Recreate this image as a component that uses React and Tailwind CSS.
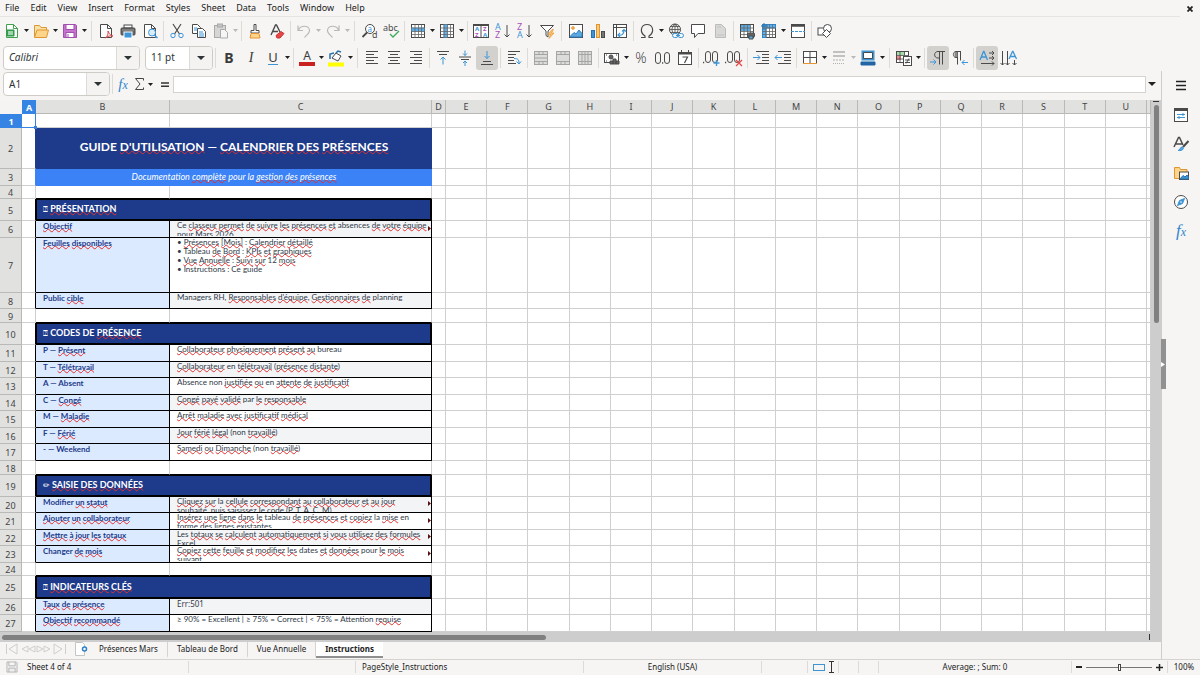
import { Fragment, useState } from "react";
import clsx from "clsx";

const BLUE = "#3d95d6";
const INK = "#4a4a4a";

function Svg({ size = 18, children, className }) {
  return (
    <svg
      width={size}
      height={size}
      viewBox="0 0 18 18"
      fill="none"
      stroke={INK}
      strokeWidth="1"
      className={clsx("shrink-0 overflow-visible", className)}
      aria-hidden="true"
    >
      {children}
    </svg>
  );
}

function Grid({ tint }) {
  return (
    <>
      <rect x="2.500" y="2.500" width="13" height="13" fill="#fff" />
      {tint}
      <path d="M2.500 6h13M2.500 9.500h13M2.500 12.500h13M6 2.500v13M9.500 2.500v13M12.500 2.500v13" stroke="#666" strokeWidth=".8" />
    </>
  );
}

const icons = {
  newDoc: (
    <>
      <path d="M3.500 2.500h7l4 4v9h-11z" fill="#fff" stroke="#3fa04d" />
      <path d="M10.500 2.500v4h4" stroke="#3fa04d" />
      <path d="M4 8h7v6H4z" fill="#3fa95a" stroke="#2e9145" />
      <path d="M5 10h5M5 12h5" stroke="#fff" />
    </>
  ),
  open: (
    <>
      <path d="M2.500 15V3.500h5l1.500 2h5.500v3" fill="#fbe0a8" stroke="#d99a35" />
      <path d="M2.500 15.500l2.500-7.500h11.500l-2 7.500z" fill="#fcd58a" stroke="#e0962f" />
    </>
  ),
  save: (
    <>
      <path d="M2.500 2.500h12l1 1v12h-13z" fill="#c774cf" stroke="#a14fae" />
      <rect x="5" y="2.500" width="8" height="5" fill="#fff" stroke="#a14fae" />
      <rect x="5" y="10.500" width="8" height="5" fill="#fff" stroke="#a14fae" />
      <path d="M7 12v3" stroke="#a14fae" />
    </>
  ),
  pdf: (
    <>
      <path d="M3.500 2.500h7l4 4v9h-11z" fill="#fff" />
      <path d="M10.500 2.500v4h4" />
      <path d="M8.500 16c2-2 3-4 2.500-7 1 3 3 5 5 5-3-.5-5 0-7.500 2z" stroke="#e04545" />
    </>
  ),
  print: (
    <>
      <rect x="5" y="3" width="8" height="3" fill="#fff" />
      <rect x="2" y="6" width="14" height="7" rx="1" fill="#666" />
      <rect x="5" y="10" width="8" height="6" fill="#3d95d6" stroke="#fff" />
      <path d="M3 8h12" stroke="#999" />
    </>
  ),
  preview: (
    <>
      <path d="M3.500 2.500h7l4 4v9h-11z" fill="#fff" />
      <path d="M10.500 2.500v4h4" />
      <circle cx="11" cy="10.500" r="3.500" fill="#d8ecfa" stroke={BLUE} />
      <path d="M13.500 13l3 3" stroke={BLUE} strokeWidth="1.500" />
    </>
  ),
  cut: (
    <>
      <path d="M5 2l6.500 10M13 2L6.500 12" strokeWidth="1.200" />
      <circle cx="5" cy="13.500" r="2.200" stroke={BLUE} />
      <circle cx="13" cy="13.500" r="2.200" stroke={BLUE} />
    </>
  ),
  copy: (
    <>
      <path d="M2.500 2.500h5l3 3v6h-8z" fill="#fff" />
      <path d="M4 6h3M4 8h3" stroke={BLUE} />
      <path d="M7.500 6.500h5l3 3v6h-8z" fill="#fff" />
      <path d="M9 10h4M9 12h5M9 14h5" stroke={BLUE} />
    </>
  ),
  paste: (
    <>
      <rect x="2.500" y="3.500" width="11" height="12" fill="#d6d6d5" stroke="#aaa" />
      <rect x="5.500" y="2" width="5" height="3" fill="#c4c4c4" stroke="#aaa" />
      <path d="M8.500 7.500h4l3 3v5.500h-7z" fill="#f5f5f5" stroke="#aaa" />
    </>
  ),
  brush: (
    <>
      <path d="M8 2.500h2v6h3v2.500H5V8.500h3z" fill="#fff" />
      <path d="M5 11.500h8l1 4.500H4z" fill="#fcd58a" stroke="#e69532" />
    </>
  ),
  clear: (
    <>
      <path d="M3 13L7.500 3h1L12 10M5 9.500h5" strokeWidth="1.400" />
      <path d="M8 13.500l5-4 3 2-4 4.500H9z" fill="#e84747" stroke="#c93434" />
    </>
  ),
  undo: <path d="M3 3.500v5h5M3.500 8c2-5 10-5 11 0 .5 3-3 5-5 7.500" stroke="#b9b9b9" strokeWidth="1.200" />,
  redo: <path d="M15 3.500v5h-5M14.500 8c-2-5-10-5-11 0-.5 3 3 5 5 7.500" stroke="#b9b9b9" strokeWidth="1.200" />,
  sort: (
    <>
      <rect x="1.500" y="2.500" width="15" height="13" fill="#fff" />
      <path d="M1.500 3h15" strokeWidth="2" />
      <path d="M9 2v14" />
    </>
  ),
  filter: (
    <>
      <path d="M2.500 3.500h13L10 9v6l-2-1.500V9z" fill="#fff" />
      <path d="M14 7.500l-4 5h2.500L11 16.500l5-5.500h-2.500l2-3.500z" fill="#fcc06a" stroke="#e69532" strokeWidth=".7" />
    </>
  ),
  image: (
    <>
      <rect x="2.500" y="2.500" width="13" height="13" fill="#fff" />
      <circle cx="6" cy="6" r="1.300" fill="#fcc06a" stroke="#e69532" />
      <path d="M3 14.500l4-4 2 1.500 3-4 3 3.500v3.500H3z" fill="#5aa9e0" stroke="#2d7fc0" />
    </>
  ),
  chart: (
    <>
      <rect x="2.500" y="8.500" width="3" height="7" fill="#3d95d6" stroke="#2672ae" />
      <rect x="7.500" y="2.500" width="3" height="13" fill="#fcc97a" stroke="#e0962f" />
      <rect x="12.500" y="9.500" width="3" height="6" fill="#777" />
    </>
  ),
  pivot: (
    <>
      <rect x="2.500" y="2.500" width="13" height="13" fill="#fff" />
      <path d="M2.500 5.500h13M5.500 2.500v13" />
      <path d="M7 13c4 1 6-1 6-5M11 9.500l2-2 2 2M9 11l-2 2 2 2" stroke={BLUE} strokeWidth="1.200" />
    </>
  ),
  omega: <path d="M3 15.500h4v-1.500C1 10 3 2.500 9 2.500s8 7.500 2 11.500v1.500h4" strokeWidth="1.200" />,
  link: (
    <>
      <circle cx="8" cy="7.500" r="5.500" />
      <path d="M2.500 7.500h11M8 2v11M4 4.500h8M4 10.500h8M8 2c-4 3-4 8 0 11M8 2c4 3 4 8 0 11" strokeWidth=".8" />
      <rect x="5.500" y="11.500" width="5.500" height="4" rx="2" fill="#f5f5f4" stroke={BLUE} />
      <rect x="11" y="11.500" width="5.500" height="4" rx="2" fill="#f5f5f4" stroke={BLUE} />
      <path d="M9 13.500h4" stroke={BLUE} />
    </>
  ),
  comment: <path d="M2.500 2.500h13v9H9l-3.500 4v-4h-3z" fill="#fff" />,
  header: (
    <>
      <path d="M4.500 2.500h6l4 4v9h-10z" fill="#d8d8d7" stroke="#bbb" />
      <path d="M6 5h4M6 13h7" stroke="#c2c2c2" />
    </>
  ),
  printRange: (
    <>
      <Grid tint={<rect x="3" y="3" width="9" height="6" fill="#5aa9e0" stroke="none" />} />
      <rect x="9.500" y="11" width="7" height="4" rx="1" fill="#666" />
      <path d="M11 14h4v3h-4z" fill="#5aa9e0" />
    </>
  ),
  freeze: (
    <Grid
      tint={
        <>
          <path d="M2.500 2.500h13V6H6v9.500H2.500z" fill="#5fb0ea" stroke="#2f86cc" />
          <path d="M4 1v7M1 4h7" stroke="#2672ae" />
        </>
      }
    />
  ),
  split: (
    <>
      <rect x="2.500" y="2.500" width="13" height="13" fill="#fff" />
      <path d="M2.500 3.500h13" strokeWidth="2.500" />
      <path d="M2 9.500h14" stroke={BLUE} strokeDasharray="3 1" />
    </>
  ),
  shapes: (
    <>
      <rect x="2" y="6" width="8" height="7" fill="#fff" />
      <circle cx="11.500" cy="6.500" r="4" fill="#fff" />
      <path d="M10.500 7.500l4 4-4 4-4-4z" fill="#fff" />
    </>
  ),
  left: <path d="M3 2.500h12M3 5.500h8M3 8.500h12M3 11.500h8M3 14.500h12" />,
  center: <path d="M3 2.500h12M5 5.500h8M3 8.500h12M5 11.500h8M3 14.500h12" />,
  right: <path d="M3 2.500h12M7 5.500h8M3 8.500h12M7 11.500h8M3 14.500h12" />,
  vTop: (
    <>
      <path d="M3 2.500h12M5 5.500h8" />
      <path d="M9 15.500V8M6.500 10.500L9 8l2.500 2.500" stroke={BLUE} />
    </>
  ),
  vMid: (
    <>
      <path d="M3 8h12M5 10.500h8" />
      <path d="M9 1.500v5M7 4.500l2 2 2-2M9 17v-5M7 14l2-2 2 2" stroke={BLUE} />
    </>
  ),
  vBottom: (
    <>
      <path d="M3 15.500h12M5 12.500h8" />
      <path d="M9 2v7.500M6.500 7L9 9.500 11.500 7" stroke={BLUE} />
    </>
  ),
  wrap: (
    <>
      <path d="M3 2.500h12M3 5.500h8M3 8.500h6M3 11.500h6M3 14.500h8" />
      <path d="M9 9.500c4 0 5 1 5 5M11.500 12.500l2.500 2.500 2-2.500" stroke={BLUE} />
    </>
  ),
  merge: (
    <>
      <rect x="2.500" y="2.500" width="13" height="13" fill="#dcdcdb" stroke="#a5a5a5" />
      <path d="M2.500 5.500h13M2.500 12.500h13M2.500 9h13M7 2.500v3M11 2.500v3M7 12.500v3M11 12.500v3" stroke="#a5a5a5" />
    </>
  ),
  mergeCells: (
    <>
      <rect x="2.500" y="2.500" width="13" height="13" fill="#dcdcdb" stroke="#a5a5a5" />
      <path d="M2.500 5.500h13M2.500 12.500h13M7 2.500v3M11 2.500v3M7 12.500v3M11 12.500v3" stroke="#a5a5a5" />
    </>
  ),
  unmerge: (
    <>
      <rect x="2.500" y="2.500" width="13" height="13" fill="#dcdcdb" stroke="#a5a5a5" />
      <path d="M2.500 5.500h13M2.500 12.500h13M6 2.500v13M9 2.500v13M12 2.500v13" stroke="#a5a5a5" />
    </>
  ),
  currency: (
    <>
      <rect x="1.500" y="4.500" width="14" height="9" fill="#fff" />
      <circle cx="8" cy="8" r="2" fill="#666" />
      <path d="M3 6h1M13 6h1M3 12h1" />
      <path d="M7 12h3v3H7zM10 10h3v5h-3zM13 12h3v3h-3z" fill="#666" />
    </>
  ),
  date: (
    <>
      <rect x="2.500" y="3.500" width="13" height="12" fill="#fff" />
      <path d="M2.500 4.500h13" strokeWidth="2" />
      <path d="M5.500 1v3M12.500 1v3" />
      <path d="M6.500 8h5l-3 6" strokeWidth="1.200" />
    </>
  ),
  indent: (
    <>
      <path d="M4 2.500h13M10 5.500h7M10 8.500h7M10 11.500h7M4 14.500h13" />
      <path d="M1 8.500h7M5.500 6L8 8.500 5.500 11" stroke={BLUE} />
    </>
  ),
  outdent: (
    <>
      <path d="M4 2.500h13M10 5.500h7M10 8.500h7M10 11.500h7M4 14.500h13" />
      <path d="M1 8.500h7M3.500 6L1 8.500 3.500 11" stroke={BLUE} />
    </>
  ),
  borders: (
    <>
      <rect x="2.500" y="2.500" width="13" height="12" fill="#fff" />
      <path d="M9 2.500v12M2.500 8.500h13" />
      <path d="M2 14.500h14" stroke="#e69532" />
    </>
  ),
  lineStyle: (
    <>
      <path d="M3 3h12M3 7h12" stroke="#b0b0b0" strokeWidth="1.500" />
      <path d="M3 11h12" stroke="#b0b0b0" strokeDasharray="2 1" />
      <path d="M3 14.500h12" stroke="#b0b0b0" strokeDasharray="1 1" />
    </>
  ),
  borderColor: (
    <>
      <rect x="3.500" y="2.500" width="11" height="8" fill="#fff" stroke="#3d95d6" strokeWidth="2" />
      <path d="M4.500 3.500h9v6h-9z" />
      <path d="M2 13h14v3H2z" fill="#2165a5" stroke="#2165a5" />
    </>
  ),
  conditional: (
    <>
      <rect x="1.500" y="2.500" width="12" height="11" fill="#fff" />
      <path d="M2 3h8v3H2z" fill="#a5dca9" stroke="none" />
      <path d="M2 7h4v4H2z" fill="#f08a8a" stroke="none" />
      <path d="M1.500 6.500h12M1.500 10h12M5 2.500v11M9.500 2.500v4" strokeWidth=".8" />
      <rect x="8.500" y="7.500" width="8" height="9" fill="#fff" />
      <path d="M10 11h5M10 13.500h5M14 9.500l-3 5" />
    </>
  ),
  ltr: (
    <>
      <path d="M16 2.500H9C4.500 2.500 4.500 9 9 9h1.500M10.500 2.500v13M13.500 2.500v13" />
      <path d="M1 13h6M4.500 10.500L7 13l-2.500 2.500" stroke={BLUE} />
    </>
  ),
  rtl: (
    <>
      <path d="M10 2.500H5C1.500 2.500 1.500 8.500 5 8.500h1.500M6.500 2.500v13M9.500 2.500v9" />
      <path d="M5 3v5" stroke="#888" strokeWidth="3" />
      <path d="M17 13.500h-6M13.500 11L11 13.500l2.500 2.500" stroke={BLUE} />
    </>
  ),
  textLtr: (
    <>
      <path d="M2 11L5.500 2.500h.5L9.500 11M3 8h5.500" stroke={BLUE} strokeWidth="1.300" />
      <path d="M11 4h5M14 2l2 2-2 2M11 9h5M14 7l2 2-2 2M3 14.500h13M14 12.500l2 2-2 2" />
    </>
  ),
  textTtb: (
    <>
      <path d="M9 10l3.500-7.500h.5L16.500 10M10 7.500h5.500" stroke={BLUE} strokeWidth="1.300" />
      <path d="M2.500 2v14M.5 14l2 2 2-2M7.500 2v14M5.500 14l2 2 2-2M14.500 11v5M12.500 14l2 2 2-2" />
    </>
  ),
};

function Glyph({ name }) {
  if (name === "find")
    return (
      <Svg>
        <circle cx="10" cy="7" r="4.500" fill="#fff" />
        <path d="M7 10.500l-4.500 4.500" strokeWidth="1.800" />
        <text x="7.500" y="9.500" fontSize="8" fill={BLUE} stroke="none" className="font-['Noto_Sans']">a</text>
        <text x="12" y="16" fontSize="9" fill={INK} stroke="none" className="font-['Noto_Sans']">d</text>
      </Svg>
    );
  if (name === "spell")
    return (
      <Svg>
        <text x="1" y="9" fontSize="9" fill={INK} stroke="none" className="font-['Noto_Sans']">abc</text>
        <path d="M8 12l3 3 6-6" stroke="#3fa95a" strokeWidth="1.300" />
      </Svg>
    );
  if (name === "rows")
    return (
      <Svg>
        <Grid tint={<rect x="2.500" y="5.500" width="13" height="4" fill="#5fb0ea" stroke="none" />} />
      </Svg>
    );
  if (name === "cols")
    return (
      <Svg>
        <Grid tint={<rect x="5.500" y="2.500" width="4" height="13" fill="#5fb0ea" stroke="none" />} />
      </Svg>
    );
  if (name === "sort")
    return (
      <Svg>
        {icons.sort}
        <g fontSize="6" fontWeight="700" stroke="none" className="font-['Noto_Sans']">
          <text x="3" y="9" fill={BLUE}>A</text>
          <text x="3" y="15" fill="#a94fb8">Z</text>
          <text x="11" y="9" fill="#a94fb8">Z</text>
          <text x="11" y="15" fill={BLUE}>A</text>
        </g>
      </Svg>
    );
  if (name === "asc" || name === "desc")
    return (
      <Svg>
        <g fontSize="9" stroke="none" className="font-['Noto_Sans']">
          <text x="1" y="8" fill={name === "asc" ? BLUE : "#a94fb8"}>{name === "asc" ? "A" : "Z"}</text>
          <text x="1" y="16" fill={name === "asc" ? "#a94fb8" : BLUE}>{name === "asc" ? "Z" : "A"}</text>
        </g>
        <path d="M13 3v12M10.500 12.500L13 15l2.500-2.500" />
      </Svg>
    );
  if (name === "bold") return <span className="text-[14px] font-bold text-[#3a3a3a]">B</span>;
  if (name === "italic") return <span className="font-['Liberation_Serif',serif] text-[14px] italic text-[#3a3a3a]">I</span>;
  if (name === "underline")
    return <span className="border-b border-[#3d95d6] text-[13px] leading-[14px] text-[#3a3a3a]">U</span>;
  if (name === "fontColor")
    return (
      <span className="flex w-4 flex-col items-center">
        <span className="text-[12px] leading-[12px] text-[#3a3a3a]">A</span>
        <span className="h-1 w-full bg-[#c9211e]" />
      </span>
    );
  if (name === "highlight")
    return (
      <Svg>
        <path d="M5 9l4-5 5 3-3 5z" fill="#fff" />
        <path d="M9 4l2-2 3 1M3 10V5l4-1" stroke="#2672ae" strokeWidth="1.500" />
        <path d="M1 13.500h16v4H1z" fill="#ffff00" stroke="none" />
      </Svg>
    );
  if (name === "percent") return <span className="font-['Open_Sans',sans-serif] text-[14px] font-light text-[#333]">%</span>;
  if (name === "number")
    return (
      <Svg>
        <rect x="1.500" y="3.500" width="5" height="11" rx="2.500" />
        <rect x="10.500" y="3.500" width="5" height="11" rx="2.500" />
        <path d="M8 14h1.200" strokeWidth="1.500" />
      </Svg>
    );
  if (name === "addDec" || name === "delDec")
    return (
      <Svg>
        <path d="M0 13.500h1.200" strokeWidth="1.500" />
        <rect x="2.500" y="2.500" width="5" height="11" rx="2.500" />
        <rect x="9.500" y="2.500" width="5" height="11" rx="2.500" />
        {name === "addDec" ? (
          <path d="M13.500 11v6M10.500 14h6" stroke={BLUE} strokeWidth="1.300" />
        ) : (
          <path d="M11 11l6 6M17 11l-6 6" stroke="#e84747" strokeWidth="1.300" />
        )}
      </Svg>
    );
  return <Svg>{icons[name]}</Svg>;
}

function Caret({ muted }) {
  return (
    <svg width="5" height="3" viewBox="0 0 5 3" fill={muted ? "#b9b9b9" : "#1f1f1f"} aria-hidden="true">
      <path d="M0 0h5L2.500 3z" />
    </svg>
  );
}

function Tool({ name, label, active, menu, muted }) {
  return (
    <>
      <button
        type="button"
        aria-label={label}
        title={label}
        className={clsx(
          "flex h-6 w-[22px] shrink-0 items-center justify-center rounded-[3px]",
          active && "bg-[#d3d1cd]"
        )}
      >
        <Glyph name={name} />
      </button>
      {menu && (
        <button type="button" aria-label={`${label} options`} className="flex h-6 w-[7px] shrink-0 items-center justify-center">
          <Caret muted={muted} />
        </button>
      )}
    </>
  );
}

function Sep({ wide }) {
  return <span className={clsx("h-5 w-px shrink-0 bg-[#dddbd8]", wide ? "mx-[3px]" : "mx-0.5")} />;
}

// "|" is a separator, "||" a wider one after a split button
const standardBar = [
  ["newDoc", "New", "menu"], ["open", "Open", "menu"], ["save", "Save", "menu"], "||",
  ["pdf", "Export as PDF"], ["print", "Print"], ["preview", "Print Preview"], "|",
  ["cut", "Cut"], ["copy", "Copy"], ["paste", "Paste", "muted"], "|",
  ["brush", "Clone Formatting"], ["clear", "Clear Formatting"], "|",
  ["undo", "Undo", "muted"], ["redo", "Redo", "muted"], "||",
  ["find", "Find & Replace"], ["spell", "Spelling"], "|",
  ["rows", "Row", "menu"], ["cols", "Column", "menu"], "|",
  ["sort", "Sort"], ["asc", "Sort Ascending"], ["desc", "Sort Descending"], ["filter", "AutoFilter"], "||",
  ["image", "Insert Image"], ["chart", "Insert Chart"], ["pivot", "Pivot Table"], "|",
  ["omega", "Special Character", "menu"], ["link", "Hyperlink"], ["comment", "Comment"], ["header", "Headers and Footers"], "|",
  ["printRange", "Print Area"], ["freeze", "Freeze Rows and Columns", "menu"], ["split", "Split Window"], "|",
  ["shapes", "Draw Functions"],
];

const formatBar = [
  ["bold", "Bold"], ["italic", "Italic"], ["underline", "Underline", "menu"], "|",
  ["fontColor", "Font Color", "menu"], ["highlight", "Background Color", "menu"], "||",
  ["left", "Align Left"], ["center", "Center"], ["right", "Align Right"], "|",
  ["vTop", "Align Top"], ["vMid", "Center Vertically"], ["vBottom", "Align Bottom", "active"], "|",
  ["wrap", "Wrap Text"], "|",
  ["merge", "Merge and Center"], ["mergeCells", "Merge Cells"], ["unmerge", "Unmerge Cells"], "|",
  ["currency", "Currency", "menu"], ["percent", "Percent"], ["number", "Number"], ["date", "Date"], "|",
  ["addDec", "Add Decimal Place"], ["delDec", "Delete Decimal Place"], "|",
  ["indent", "Increase Indent"], ["outdent", "Decrease Indent"], "|",
  ["borders", "Borders", "menu"], ["lineStyle", "Border Style", "muted"], ["borderColor", "Border Color", "menu"], "||",
  ["conditional", "Conditional Formatting", "menu"], "|",
  ["ltr", "Left-To-Right", "active"], ["rtl", "Right-To-Left"], "|",
  ["textLtr", "Text Direction Horizontal", "active"], ["textTtb", "Text Direction Vertical"],
];

function Tools({ items }) {
  return items.map((item, i) =>
    typeof item === "string" ? (
      <Sep key={i} wide={item === "||"} />
    ) : (
      <Tool
        key={item[0]}
        name={item[0]}
        label={item[1]}
        active={item[2] === "active"}
        menu={item[2] === "menu" || item[2] === "muted"}
        muted={item[2] === "muted"}
      />
    )
  );
}

function Combo({ label, value, className, italic }) {
  const [text, setText] = useState(value);
  return (
    <div className={clsx("flex h-6 shrink-0 overflow-hidden rounded-[4px] border border-[#cfccc8] bg-white", className)}>
      <input
        aria-label={label}
        value={text}
        onChange={(e) => setText(e.target.value)}
        className={clsx("min-w-0 flex-1 px-[5px] text-[10px] text-[#2e3436] outline-none", italic && "italic")}
      />
      <button
        type="button"
        aria-label={`${label} list`}
        className="flex w-[23px] items-center justify-center border-l border-[#dddbd8] bg-[#f4f3f1]"
      >
        <svg width="8" height="4" viewBox="0 0 8 4" fill="#2e3436" aria-hidden="true">
          <path d="M0 0h8L4 4z" />
        </svg>
      </button>
    </div>
  );
}

const menus = ["File", "Edit", "View", "Insert", "Format", "Styles", "Sheet", "Data", "Tools", "Window", "Help"];
const columns = "EFGHIJKLMNOPQRSTU".split("");

// words between asterisks are flagged by the spell checker
const rows = [
  { h: "h-[14px]", kind: "blank" },
  { h: "h-[41px]", kind: "title", b: "GUIDE *D'UTILISATION* — *CALENDRIER* *DES* *PRÉSENCES*" },
  { h: "h-[17px]", kind: "subtitle", b: "Documentation *complète* pour la *gestion* *des* *présences*" },
  { h: "h-[13px]", kind: "blank", before: true },
  { h: "h-[22px]", kind: "section", icon: "⍰", b: "*PRÉSENTATION*" },
  { h: "h-[17px]", kind: "data", b: "*Objectif*", shade: true, more: true, c: ["Ce *classeur* *permet* *de* *suivre* *les* *présences* *et* absences *de* *votre* *équipe*", "pour Mars 2026."] },
  { h: "h-[55px]", kind: "data", b: "*Feuilles* *disponibles*", c: ["• *Présences* *[Mois]* : *Calendrier* *détaillé*", "• Tableau *de* *Bord* : *KPIs* *et* *graphiques*", "• *Vue* *Annuelle* : *Suivi* *sur* 12 *mois*", "• Instructions : Ce guide"] },
  { h: "h-[16px]", kind: "data", b: "Public *cible*", shade: true, c: ["Managers RH, *Responsables* *d'équipe*, *Gestionnaires* *de* planning"] },
  { h: "h-[14px]", kind: "blank", before: true },
  { h: "h-[22px]", kind: "section", icon: "⍰", b: "CODES DE *PRÉSENCE*" },
  { h: "h-[17px]", kind: "data", b: "P — *Présent*", c: ["*Collaborateur* *physiquement* *présent* *au* bureau"] },
  { h: "h-[16px]", kind: "data", b: "T — *Télétravail*", shade: true, c: ["*Collaborateur* en *télétravail* (*présence* *distante*)"] },
  { h: "h-[17px]", kind: "data", b: "A — Absent", c: ["Absence non *justifiée* *ou* en *attente* *de* *justificatif*"] },
  { h: "h-[16px]", kind: "data", b: "C — *Congé*", shade: true, c: ["*Congé* *payé* *validé* par *le* *responsable*"] },
  { h: "h-[17px]", kind: "data", b: "M — *Maladie*", c: ["*Arrêt* *maladie* *avec* *justificatif* *médical*"] },
  { h: "h-[16px]", kind: "data", b: "F — *Férié*", shade: true, c: ["*Jour* *férié* *légal* (non *travaillé*)"] },
  { h: "h-[17px]", kind: "data", b: "- — Weekend", c: ["*Samedi* *ou* *Dimanche* (non *travaillé*)"] },
  { h: "h-[14px]", kind: "blank", before: true },
  { h: "h-[22px]", kind: "section", icon: "✏", b: "*SAISIE* *DES* *DONNÉES*" },
  { h: "h-[16px]", kind: "data", b: "Modifier *un* *statut*", shade: true, more: true, c: ["*Cliquez* *sur* la *cellule* *correspondant* *au* *collaborateur* *et* *au* *jour*", "*souhaité*, *puis* *saisissez* *le* code (P, T, A, C, M)"] },
  { h: "h-[17px]", kind: "data", b: "*Ajouter* *un* *collaborateur*", more: true, c: ["*Insérez* *une* *ligne* *dans* *le* tableau *de* *présences* *et* *copiez* la *mise* en", "*forme* *des* *lignes* *existantes*"] },
  { h: "h-[16px]", kind: "data", b: "*Mettre* *à* *jour* *les* *totaux*", shade: true, more: true, c: ["Les *totaux* *se* *calculent* *automatiquement* *si* *vous* *utilisez* *des* *formules*", "Excel"] },
  { h: "h-[17px]", kind: "data", b: "Changer *de* *mois*", more: true, c: ["*Copiez* *cette* *feuille* *et* *modifiez* *les* dates *et* *données* pour *le* *mois*", "*suivant*"] },
  { h: "h-[13px]", kind: "blank", before: true },
  { h: "h-[23px]", kind: "section", icon: "⍰", b: "*INDICATEURS* *CLÉS*" },
  { h: "h-[16px]", kind: "data", b: "*Taux* *de* *présence*", shade: true, mono: true, c: ["Err:501"] },
  { h: "h-[17px]", kind: "data", b: "*Objectif* *recommandé*", c: ["≥ 90% = Excellent | ≥ 75% = Correct | < 75% = Attention *requise*"] },
];

const edges = {
  title: "border-r-[#1e3a8a] border-b-[#cfcfcf]",
  subtitle: "border-r-[#3b82f6] border-b-[#cfcfcf]",
  section: "border-r-black border-b-[#cfcfcf]",
  data: "border-r-black border-b-[#cfcfcf]",
  blank: "border-[#cfcfcf]",
};

function Checked({ text }) {
  return text.split("*").map((part, i) =>
    i % 2 ? (
      <span
        key={i}
        className="underline decoration-[#e03030] decoration-wavy decoration-1 -underline-offset-1 [text-decoration-skip-ink:none]"
      >
        {part}
      </span>
    ) : (
      <Fragment key={i}>{part}</Fragment>
    )
  );
}

const line = "border-r border-b border-[#cfcfcf]";

function RowCells({ row }) {
  if (row.kind === "blank") {
    const edge = row.before ? "border-b-black" : "";
    return (
      <>
        <td className={clsx(line, edge)} />
        <td className={clsx(line, edge)} />
      </>
    );
  }
  if (row.kind === "title")
    return (
      <td colSpan={2} className="bg-[#1e3a8a] p-0 pb-1 text-center text-[12px] font-bold leading-[16px] text-white">
        <Checked text={row.b} />
      </td>
    );
  if (row.kind === "subtitle")
    return (
      <td colSpan={2} className="bg-[#3b82f6] p-0 pb-0.5 text-center text-[9px] italic leading-[12px] text-white">
        <Checked text={row.b} />
      </td>
    );
  if (row.kind === "section")
    return (
      <td
        colSpan={2}
        className="border-r border-b border-black bg-[#1e3a8a] p-0 pl-[7px] text-[9px] font-bold leading-[14px] text-white shadow-[inset_0_0_0_1px_#000]"
      >
        <span className="font-['DejaVu_Sans',sans-serif] text-[8px] font-normal">{row.icon}</span>{" "}
        <Checked text={row.b} />
      </td>
    );
  return (
    <>
      <td className="border-r border-b border-black bg-[#dbeafe] p-0 pl-[7px] align-top font-bold text-[#1e3a8a]">
        <div className="whitespace-nowrap text-[8px] leading-[10px]">
          <Checked text={row.b} />
        </div>
      </td>
      <td
        className={clsx(
          "relative border-r border-b border-black p-0 pl-[7px] align-top text-[#303a48]",
          row.shade ? "bg-[#f3f4f6]" : "bg-white"
        )}
      >
        <div
          className={clsx(
            "whitespace-nowrap text-[8px] leading-[9px]",
            row.mono && "font-['Noto_Sans',sans-serif]",
            row.c.length === 2 && "h-[15px] overflow-hidden"
          )}
        >
          {row.c.map((text) => (
            <p key={text}>
              <Checked text={text} />
            </p>
          ))}
        </div>
        {row.more && (
          <svg className="absolute right-0 bottom-1.5" width="3" height="5" viewBox="0 0 3 5" fill="#5c1010" aria-hidden="true">
            <path d="M0 0l3 2.500L0 5z" />
          </svg>
        )}
      </td>
    </>
  );
}

function Sheet() {
  const head = "border-r border-b border-[#b9b9b8] bg-[#e1e1e0] p-0 pt-px font-normal";
  return (
    <table className="w-full table-fixed border-separate border-spacing-0 bg-white font-['Lato',sans-serif]">
      <colgroup>
        <col className="w-[22px]" />
        <col className="w-[14px]" />
        <col className="w-[134px]" />
        <col className="w-[262px]" />
        <col className="w-[14px]" />
        {columns.map((c) => (
          <col key={c} />
        ))}
        <col className="w-1" />
      </colgroup>
      <thead>
        <tr className="h-[14px] font-['Noto_Sans',sans-serif] text-[9px] leading-[12px] text-[#444]">
          <td className="bg-[#f5f4f2]" />
          <th scope="col" className="bg-[#3584e4] p-0 pt-px font-bold text-white">A</th>
          {["B", "C", "D", ...columns].map((c) => (
            <th key={c} scope="col" className={head}>{c}</th>
          ))}
          <td className={head} />
        </tr>
      </thead>
      <tbody>
        {rows.map((row, i) => (
          <tr key={i} className={row.h}>
            <th
              scope="row"
              className={clsx(
                "p-0 pt-0.5 font-['Noto_Sans',sans-serif] text-[9px] leading-[10px]",
                i === 0 ? "bg-[#3584e4] font-bold text-white" : "border-r border-b border-[#b9b9b8] bg-[#e1e1e0] font-normal text-[#444]"
              )}
            >
              {i + 1}
            </th>
            <td className={clsx("border-r border-b p-0", i === 0 ? "relative border-[#3584e4]" : edges[row.kind])}>
              {i === 0 && <span className="absolute -right-0.5 -bottom-0.5 z-10 size-[3px] bg-[#3584e4]" />}
            </td>
            <RowCells row={row} />
            {["D", ...columns, "V"].map((c) => (
              <td key={c} className={line} />
            ))}
          </tr>
        ))}
      </tbody>
    </table>
  );
}

function Fx({ big }) {
  return (
    <span className={clsx("font-['Liberation_Serif',serif] italic text-[#2f86cc]", big ? "text-[17px]" : "text-[15px]")}>
      f<span className="text-[12px]">x</span>
    </span>
  );
}

function Sidebar() {
  const item = "flex h-[29px] w-full items-center justify-center";
  return (
    <aside className="flex w-[38px] shrink-0 flex-col items-center">
      <button type="button" aria-label="Sidebar Settings" className={item}>
        <Svg><path d="M4 4.500h10M4 8.500h10M4 12.500h10" stroke="#222" strokeWidth="1.500" /></Svg>
      </button>
      <button type="button" aria-label="Properties" className={item}>
        <Svg>
          <rect x="2.500" y="2.500" width="13" height="13" fill="#fff" />
          <path d="M2 3.500h14" strokeWidth="3" />
          <path d="M5 8.500h8M5 11.500h8M11 7v3M7 10v3" stroke={BLUE} />
        </Svg>
      </button>
      <button type="button" aria-label="Styles" className={item}>
        <Svg>
          <path d="M2 12L6.500 2.500h1L11 10M4 9h6" strokeWidth="1.500" />
          <path d="M16.500 6L11 12" strokeWidth="2" />
          <path d="M6 15.500c2 0 2-3.500 4-3.500s2.500 4-4 3.500z" fill="#5aa9e0" stroke={BLUE} />
        </Svg>
      </button>
      <button type="button" aria-label="Gallery" className={item}>
        <Svg>
          <path d="M2.500 14.500v-11h5l1 2h6.500v9z" fill="#fcd58a" stroke="#e0962f" />
          <rect x="7.500" y="8" width="9" height="7.500" fill="#fff" />
          <path d="M8 15l3-3.500 2 1.500 2-2 1.500 2v2z" fill="#3d95d6" stroke="#2672ae" />
        </Svg>
      </button>
      <button type="button" aria-label="Navigator" className={item}>
        <Svg>
          <circle cx="9" cy="9" r="6.500" fill="#fff" />
          <path d="M12.500 5.500L10.500 10.500 5.500 12.500 7.500 7.500z" fill="#3d95d6" stroke={BLUE} />
          <circle cx="9" cy="9" r=".8" fill="#fff" stroke="none" />
        </Svg>
      </button>
      <button type="button" aria-label="Functions" className={item}>
        <Fx big />
      </button>
    </aside>
  );
}

function SheetTabs() {
  const [current, setCurrent] = useState("Instructions");
  return (
    <div className="flex h-[17px] shrink-0 items-start pl-1.5">
      <svg width="60" height="14" viewBox="0 0 60 14" fill="none" stroke="#cfcecc" aria-hidden="true">
        <path d="M.5 2v10M11 2L3 7l8 5zM22 4l-6 3 6 3zM29 4l-6 3 6 3zM31 4l6 3-6 3zM38 4l6 3-6 3zM48 2l8 5-8 5zM59.500 2v10" />
      </svg>
      <button type="button" aria-label="Add Sheet" className="ml-2 flex">
        <svg width="14" height="14" viewBox="0 0 14 14" aria-hidden="true">
          <path d="M1.500.5h7l2 2v11h-9z" fill="#fff" stroke="#c5c5c4" />
          <circle cx="10.500" cy="7" r="2" fill="#fff" stroke="#2f7fc4" strokeWidth="1.500" />
        </svg>
      </button>
      <div role="tablist" className="ml-0.5 flex h-4">
        {["Présences Mars", "Tableau de Bord", "Vue Annuelle", "Instructions"].map((tab) => (
          <button
            key={tab}
            type="button"
            role="tab"
            aria-selected={tab === current}
            onClick={() => setCurrent(tab)}
            className={clsx(
              "flex items-center border-b-2 px-[9px] text-[8px] leading-[12px]",
              tab === current
                ? "border-b-[#8f8f8f] bg-white font-bold text-[#222]"
                : "border-r border-r-[#d5d3d0] border-b-transparent text-[#222]"
            )}
          >
            {tab}
          </button>
        ))}
      </div>
    </div>
  );
}

function StatusBar() {
  const cell = "flex h-3 items-center justify-center border-l border-[#dddbd8]";
  return (
    <footer className="flex h-4 shrink-0 items-center border-t border-[#d5d3d0] pb-px text-[8px] leading-[12px] text-[#222]">
      <Svg size={14} className="ml-[5px]">
        <path d="M2.500 2.500h12l1 1v12h-13zM5 2.500v5h8v-5M5 15.500v-5h8v5" stroke="#aaa" fill="#eee" />
      </Svg>
      <span className="w-[169px] pl-2">Sheet 4 of 4</span>
      <span className={clsx(cell, "w-[167px]")} />
      <span className={clsx(cell, "flex-1 justify-start pl-1.5")}>PageStyle_Instructions</span>
      <span className={clsx(cell, "w-[178px]")}>English (USA)</span>
      <span className={clsx(cell, "w-[46px]")} />
      <span className={clsx(cell, "w-[31px] gap-1")}>
        <span className="h-[7px] w-3 border border-[#3d95d6]" />
        <svg width="5" height="12" viewBox="0 0 5 12" fill="none" stroke="#333" aria-hidden="true">
          <path d="M0 .5h5M2.500.5v11M0 11.500h5" />
        </svg>
      </span>
      <span className={clsx(cell, "w-5")} />
      <span className={clsx(cell, "w-5")} />
      <span className={clsx(cell, "w-[193px]")}>Average: ; Sum: 0</span>
      <div className={clsx(cell, "w-[96px] gap-1")}>
        <button type="button" aria-label="Zoom Out" className="h-0.5 w-1.5 bg-[#222]" />
        <input
          type="range"
          aria-label="Zoom"
          defaultValue="50"
          className="h-3 w-[66px] appearance-none bg-transparent [&::-webkit-slider-runnable-track]:h-px [&::-webkit-slider-runnable-track]:bg-[#777] [&::-webkit-slider-thumb]:-mt-[3px] [&::-webkit-slider-thumb]:h-[7px] [&::-webkit-slider-thumb]:w-[3px] [&::-webkit-slider-thumb]:appearance-none [&::-webkit-slider-thumb]:border [&::-webkit-slider-thumb]:border-[#444] [&::-webkit-slider-thumb]:bg-white"
        />
        <button type="button" aria-label="Zoom In">
          <svg width="7" height="7" viewBox="0 0 7 7" stroke="#222" strokeWidth="1.500" aria-hidden="true">
            <path d="M0 3.500h7M3.500 0v7" />
          </svg>
        </button>
      </div>
      <span className={clsx(cell, "w-[33px]")}>100%</span>
    </footer>
  );
}

export default function App() {
  const [formula, setFormula] = useState("");
  return (
    <div className="flex h-screen flex-col overflow-hidden bg-[#f6f5f4] font-['Noto_Sans',sans-serif] text-[#333]">
      <header className="flex h-[17px] shrink-0 items-center">
        <nav className="flex h-full flex-1 items-center gap-px border-b border-[#e6e4e1]">
          {menus.map((menu) => (
            <button key={menu} type="button" className="px-[5px] text-[9px] leading-[14px] text-[#222]">
              {menu}
            </button>
          ))}
        </nav>
        <button type="button" aria-label="Close Document" className="flex w-5 items-center justify-center">
          <svg width="6" height="6" viewBox="0 0 6 6" stroke="#222" strokeWidth="1.800" aria-hidden="true">
            <path d="M.5.5l5 5M5.500.5l-5 5" />
          </svg>
        </button>
      </header>

      <div role="toolbar" aria-label="Standard" className="flex h-[27px] shrink-0 items-center pl-px">
        <Tools items={standardBar} />
      </div>
      <div role="toolbar" aria-label="Formatting" className="flex h-[27px] shrink-0 items-center pl-[3px]">
        <Combo label="Font Name" value="Calibri" className="w-[137px]" italic />
        <Combo label="Font Size" value="11 pt" className="ml-[5px] w-[68px]" />
        <Sep />
        <Tools items={formatBar} />
      </div>

      <div className="flex min-h-0 flex-1">
        <main className="flex min-w-0 flex-1 flex-col">
          <div className="flex h-[29px] shrink-0 items-center pb-[3px] pl-[3px]">
            <Combo label="Name Box" value="A1" className="w-[107px]" />
            <Sep />
            <button type="button" aria-label="Function Wizard" className="flex h-6 w-4 items-center justify-center">
              <Fx />
            </button>
            <button type="button" aria-label="Select Function" className="flex h-6 w-[26px] items-center justify-center gap-1">
              <svg width="9" height="12" viewBox="0 0 9 12" fill="none" stroke="#444" aria-hidden="true">
                <path d="M8.500 2.500v-2h-8L5 6 .5 11.500h8v-2" />
              </svg>
              <Caret />
            </button>
            <button type="button" aria-label="Formula" className="flex h-6 w-4 items-center justify-center">
              <svg width="8" height="5" viewBox="0 0 8 5" stroke="#333" strokeWidth="1.500" aria-hidden="true">
                <path d="M0 1h8M0 4.250h8" />
              </svg>
            </button>
            <input
              aria-label="Input line"
              value={formula}
              onChange={(e) => setFormula(e.target.value)}
              className="h-[17px] min-w-0 flex-1 border border-[#d5d3d0] bg-white px-1 text-[10px] outline-none"
            />
            <button type="button" aria-label="Expand Formula Bar" className="flex w-3 items-center justify-center">
              <svg width="8" height="4" viewBox="0 0 8 4" fill="#222" aria-hidden="true">
                <path d="M0 0h8L4 4z" />
              </svg>
            </button>
            <span className="w-[3px]" />
          </div>
          <div className="flex min-h-0 flex-1">
            <div className="min-w-0 flex-1 overflow-hidden">
              <Sheet />
            </div>
            <div className="flex w-2.5 shrink-0 flex-col items-center bg-[#cdcdcd]">
              <span className="mt-px h-px w-1.5 bg-[#333]" />
              <span className="mt-[3px] h-[218px] w-[5px] rounded-full bg-[#808080]" />
            </div>
          </div>
          <div className="flex h-2.5 shrink-0 items-center bg-[#cdcdcd] pl-0.5">
            <span className="h-[5px] w-[544px] rounded-full bg-[#808080]" />
            <span className="ml-auto mr-[11px] h-1.5 w-px bg-[#333]" />
          </div>
          <SheetTabs />
        </main>
        <div className="relative w-px shrink-0 bg-[#cfcdca]">
          <button
            type="button"
            aria-label="Collapse sidebar"
            className="absolute top-[268px] left-0 flex h-[50px] w-[5px] items-center bg-[#919191]"
          >
            <svg width="4" height="5" viewBox="0 0 4 5" fill="#fff" aria-hidden="true">
              <path d="M0 0l4 2.500L0 5z" />
            </svg>
          </button>
        </div>
        <Sidebar />
      </div>
      <StatusBar />
    </div>
  );
}
